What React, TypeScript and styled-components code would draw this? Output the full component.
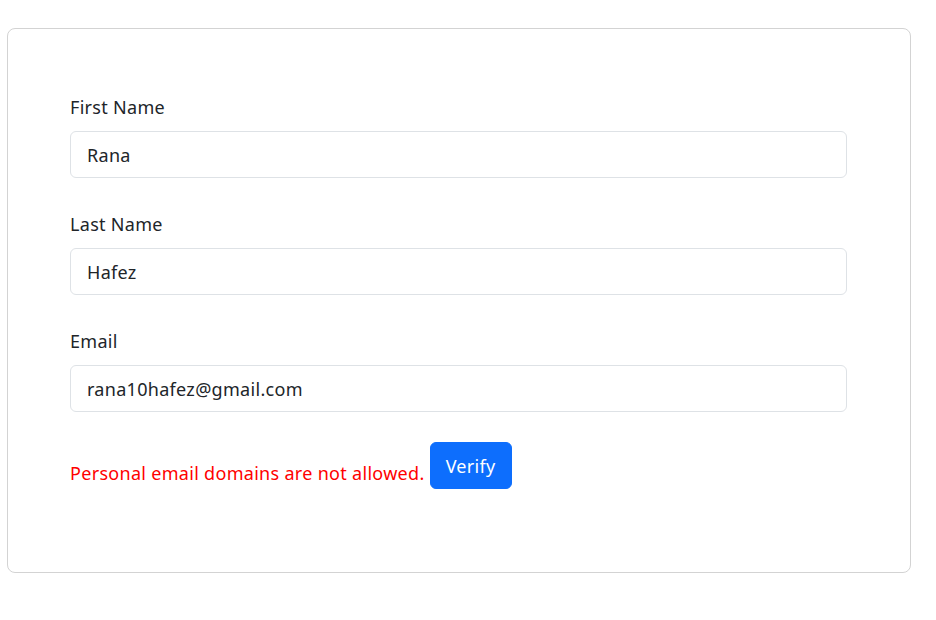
import React from "react";
import styled, { createGlobalStyle } from "styled-components";

const GlobalStyle = createGlobalStyle`
  html, body { margin: 0; padding: 0; background: #ffffff; }
  body {
    font-family: "Noto Sans", "Open Sans", sans-serif;
    color: #212529;
  }
  * { box-sizing: border-box; }
`;

const Page = styled.div`
  padding: 28px 0 0 7px;
`;

const Card = styled.div`
  width: 904px;
  height: 545px;
  border: 1px solid #d3d3d3;
  border-radius: 8px;
  padding: 65px 63px 0 62px;
  background: #fff;
`;

const Group = styled.div`
  display: flex;
  flex-direction: column;
  margin-bottom: 33px;
`;

const Label = styled.label`
  font-size: 18px;
  line-height: 27px;
  letter-spacing: 0.3px;
  color: #212529;
  margin-bottom: 10px;
`;

const Input = styled.input`
  width: 100%;
  height: 47px;
  padding: 0 16px;
  font-family: inherit;
  font-size: 18px;
  letter-spacing: 0.3px;
  color: #212529;
  border: 1px solid #dee2e6;
  border-radius: 6px;
  outline: none;
  background: #fff;
`;

const Row = styled.div`
  display: flex;
  align-items: flex-start;
  margin-top: -3px;
  gap: 5px;
`;

const ErrorText = styled.span`
  font-size: 18px;
  line-height: 27px;
  letter-spacing: 0.3px;
  color: #ff0000;
  padding-top: 18px;
`;

const Button = styled.button`
  height: 47px;
  width: 82px;
  padding: 0;
  font-family: inherit;
  font-size: 18px;
  letter-spacing: 0.3px;
  color: #fff;
  background: #0d6efd;
  border: 1px solid #0d6efd;
  border-radius: 6px;
  cursor: pointer;
`;

const fields = [
  { label: "First Name", value: "Rana" },
  { label: "Last Name", value: "Hafez" },
  { label: "Email", value: "rana10hafez@gmail.com" },
];

export default function App() {
  return (
    <>
      <GlobalStyle />
      <Page>
        <Card>
          {fields.map((f) => (
            <Group key={f.label}>
              <Label>{f.label}</Label>
              <Input defaultValue={f.value} />
            </Group>
          ))}
          <Row>
            <ErrorText>Personal email domains are not allowed.</ErrorText>
            <Button>Verify</Button>
          </Row>
        </Card>
      </Page>
    </>
  );
}
